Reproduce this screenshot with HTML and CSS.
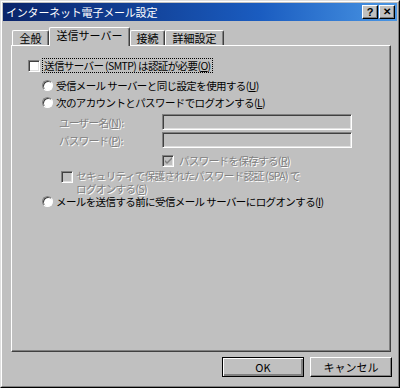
FILE: index.html
```html
<!DOCTYPE html>
<html lang="ja">
<head>
    <meta charset="UTF-8">
    <title>インターネット電子メール設定</title>
    <link rel="stylesheet" href="styles.css">
</head>
<body>
    <div class="window">
        <div class="window-inner">
            <div class="titlebar">
                <span class="title">インターネット電子メール設定</span>
                <div class="title-buttons">
                    <span class="tbtn">?</span>
                    <span class="tbtn close">✕</span>
                </div>
            </div>

            <div class="tabs">
                <div class="tab tab-general">全般</div>
                <div class="tab tab-send active">送信サーバー</div>
                <div class="tab tab-conn">接続</div>
                <div class="tab tab-adv">詳細設定</div>
            </div>

            <div class="panel">
                <div class="row row-auth">
                    <span class="check"></span>
                    <span class="focus">送信サーバー (SMTP) は認証が必要(<u>O</u>)</span>
                </div>

                <div class="row row-radio first">
                    <span class="radio"></span>
                    <span>受信メール サーバーと同じ設定を使用する(<u>U</u>)</span>
                </div>
                <div class="row row-radio">
                    <span class="radio"></span>
                    <span>次のアカウントとパスワードでログオンする(<u>L</u>)</span>
                </div>

                <div class="field">
                    <label class="disabled">ユーザー名(<u>N</u>):</label>
                    <span class="input"></span>
                </div>
                <div class="field">
                    <label class="disabled">パスワード(<u>P</u>):</label>
                    <span class="input"></span>
                </div>

                <div class="row row-save">
                    <span class="check checked-off">
                        <svg width="9" height="9" viewBox="0 0 9 9"><path d="M1 4 L3 6 L8 1 L8 3 L3 8 L1 6 Z" fill="#808080"/></svg>
                    </span>
                    <span class="disabled">パスワードを保存する(<u>R</u>)</span>
                </div>

                <div class="row row-spa">
                    <span class="check off"></span>
                    <div class="spa-text">
                        <div class="disabled spa-line">セキュリティで保護されたパスワード認証 (SPA) で</div>
                        <div class="disabled spa-line">ログオンする(<u>S</u>)</div>
                    </div>
                </div>

                <div class="row row-radio last">
                    <span class="radio"></span>
                    <span>メールを送信する前に受信メール サーバーにログオンする(<u>I</u>)</span>
                </div>
            </div>

            <div class="footer">
                <button class="btn default">OK</button>
                <button class="btn">キャンセル</button>
            </div>
        </div>
    </div>
</body>
</html>
```

FILE: styles.css
```css
body {
    margin: 0;
    background-color: #c0c0c0;
    font-family: "Noto Sans CJK JP", "DejaVu Sans", sans-serif;
    font-size: 11px;
    color: #000;
}
.window {
    width: 400px;
    height: 388px;
    box-sizing: border-box;
    border: 1px solid;
    border-color: #dfdfdf #000 #000 #dfdfdf;
    background-color: #c0c0c0;
}
.window-inner {
    height: 100%;
    box-sizing: border-box;
    border: 1px solid;
    border-color: #fff #808080 #808080 #fff;
    padding: 1px;
    display: flex;
    flex-direction: column;
}
.titlebar {
    height: 18px;
    display: flex;
    align-items: center;
    justify-content: space-between;
    padding: 0 2px 0 3px;
    background: linear-gradient(to right, #0a246a, #1a5cc0 65%, #4a96e4);
    color: #fff;
}
.title {
    font-size: 11px;
    line-height: 18px;
    letter-spacing: -0.2px;
}
.title-buttons {
    display: flex;
    gap: 1px;
}
.tbtn {
    width: 12px;
    height: 10px;
    border: 1px solid;
    border-color: #fff #000 #000 #fff;
    box-shadow: inset -1px -1px #808080;
    background-color: #c0c0c0;
    color: #000;
    font: bold 11px/10px "Liberation Sans", sans-serif;
    text-align: center;
    padding: 1px;
}
.tbtn.close {
    font-size: 10px;
}
.tabs {
    display: flex;
    align-items: flex-end;
    margin-top: 6px;
    padding-left: 9px;
    height: 18px;
}
.tab {
    box-sizing: border-box;
    height: 15px;
    border: 1px solid;
    border-bottom: none;
    border-color: #fff #404040 #fff #fff;
    box-shadow: inset -1px 0 #808080;
    border-radius: 2px 2px 0 0;
    text-align: center;
    line-height: 14px;
}
.tab-general { width: 37px; }
.tab-send { width: 81px; }
.tab-conn { width: 35px; }
.tab-adv { width: 59px; }
.tab.active {
    height: 19px;
    line-height: 15px;
    position: relative;
    z-index: 1;
    margin-bottom: -1px;
    background-color: #c0c0c0;
}
.panel {
    flex: none;
    height: 307px;
    box-sizing: border-box;
    margin: 0 6px 0 8px;
    border: 1px solid;
    border-color: #fff #404040 #404040 #fff;
    box-shadow: inset -1px -1px #808080;
    padding: 12px 0 0 16px;
    font-size: 10.5px;
    letter-spacing: -0.6px;
}
.row {
    display: flex;
    align-items: center;
    height: 15px;
}
.check {
    box-sizing: border-box;
    width: 12px;
    height: 12px;
    border: 1px solid;
    border-color: #808080 #fff #fff #808080;
    box-shadow: inset 1px 1px #404040, inset -1px -1px #dfdfdf;
    background-color: #fff;
    display: flex;
    align-items: center;
    justify-content: center;
    margin-right: 3px;
    flex: none;
}
.check.off,
.check.checked-off {
    background-color: #c0c0c0;
}
.focus {
    outline: 1px dotted #000;
    padding: 0 1px;
    line-height: 13px;
}
.radio {
    box-sizing: border-box;
    width: 11px;
    height: 11px;
    border-radius: 50%;
    border: 1px solid;
    border-color: #808080 #fff #fff #808080;
    box-shadow: inset 1px 1px #404040;
    background-color: #fff;
    margin-right: 3px;
    flex: none;
}
.row-radio {
    margin-left: 14px;
    margin-top: 2px;
}
.row-radio.first {
    margin-top: 5px;
}
.row-radio.last {
    margin-top: 0;
    height: 13px;
}
.disabled {
    color: #808080;
    text-shadow: 1px 1px 0 #fff;
}
.field {
    display: flex;
    align-items: center;
    margin-left: 31px;
    margin-top: 4px;
    height: 16px;
}
.field + .field {
    margin-top: 2px;
}
.field label {
    width: 103px;
}
.input {
    box-sizing: border-box;
    width: 190px;
    height: 16px;
    border: 1px solid;
    border-color: #808080 #fff #fff #808080;
    box-shadow: inset 1px 1px #404040, inset -1px -1px #dfdfdf;
    background-color: #c0c0c0;
}
.row-save {
    margin-left: 134px;
    margin-top: 5px;
}
.row-save .check {
    margin-right: 5px;
}
.row-spa {
    margin-left: 33px;
    margin-top: 1px;
    height: auto;
    align-items: flex-start;
}
.row-spa .check {
    margin-top: 2px;
}
.spa-line {
    height: 13px;
    line-height: 13px;
}
.footer {
    display: flex;
    justify-content: flex-end;
    gap: 6px;
    margin-top: 5px;
    padding-right: 5px;
}
.btn {
    box-sizing: border-box;
    width: 82px;
    height: 20px;
    background-color: #c0c0c0;
    border: 1px solid;
    border-color: #fff #000 #000 #fff;
    box-shadow: inset -1px -1px #808080;
    font-family: "Noto Sans CJK JP", "DejaVu Sans", sans-serif;
    font-size: 11px;
    padding: 0;
    color: #000;
}
.btn.default {
    border: 1px solid #000;
    box-shadow: inset 1px 1px #fff, inset -2px -2px #808080;
}
```
